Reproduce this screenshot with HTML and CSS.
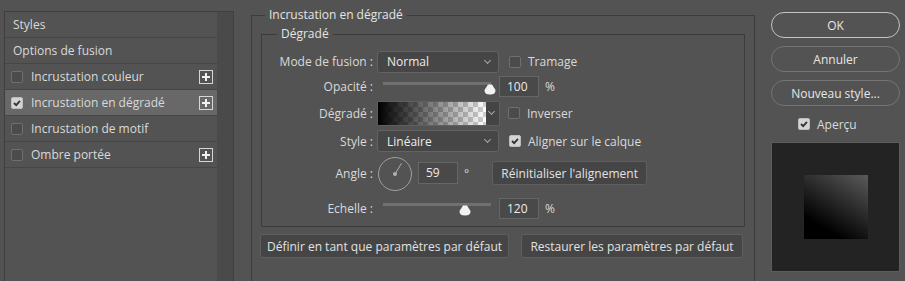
FILE: index.html
```html
<!DOCTYPE html>
<html lang="fr">
  <head>
    <meta charset="UTF-8" />
    <title>Style de calque</title>
    <link rel="stylesheet" href="styles.css">
  </head>
  <body>
    <div class="dialog">
      <div class="sidebar">
        <div class="style-list">
          <div class="list-row">Styles</div>
          <div class="list-row">Options de fusion</div>
          <div class="list-row check-row">
            <span class="checkbox"></span>Incrustation couleur
            <span class="plus"></span>
          </div>
          <div class="list-row check-row selected">
            <span class="checkbox checked"></span>Incrustation en dégradé
            <span class="plus"></span>
          </div>
          <div class="list-row check-row">
            <span class="checkbox"></span>Incrustation de motif
          </div>
          <div class="list-row check-row">
            <span class="checkbox"></span>Ombre portée
            <span class="plus"></span>
          </div>
        </div>
        <div class="scroll"></div>
      </div>

      <div class="main">
        <div class="group outer">
          <div class="group-title">Incrustation en dégradé</div>
          <div class="group inner">
            <div class="group-title">Dégradé</div>

            <div class="row row-1">
              <span class="row-label">Mode de fusion :</span>
              <div class="select">Normal<span class="chevron"></span></div>
              <span class="checkbox gap-10"></span><span class="check-label">Tramage</span>
            </div>

            <div class="row row-2">
              <span class="row-label">Opacité :</span>
              <div class="slider">
                <div class="track"></div>
                <div class="thumb" style="left: 100%"></div>
              </div>
              <div class="field">100</div><span class="unit">%</span>
            </div>

            <div class="row row-3">
              <span class="row-label">Dégradé :</span>
              <div class="swatch">
                <div class="swatch-ramp"></div>
                <div class="swatch-drop"><span class="chevron"></span></div>
              </div>
              <span class="checkbox gap-8"></span><span class="check-label">Inverser</span>
            </div>

            <div class="row row-4">
              <span class="row-label">Style :</span>
              <div class="select">Linéaire<span class="chevron"></span></div>
              <span class="checkbox checked gap-10"></span><span class="check-label">Aligner sur le calque</span>
            </div>

            <div class="row row-5">
              <span class="row-label">Angle :</span>
              <svg class="dial" width="36" height="36" viewBox="0 0 36 36">
                <circle cx="18" cy="18" r="16.5" fill="none" stroke="#a0a0a0" stroke-width="1" />
                <line x1="18" y1="18" x2="24.5" y2="7.3" stroke="#b0b0b0" stroke-width="1" />
                <circle cx="18" cy="18" r="2" fill="#b0b0b0" />
              </svg>
              <div class="field angle">59</div><span class="unit">°</span>
              <button class="btn reset">Réinitialiser l'alignement</button>
            </div>

            <div class="row row-6">
              <span class="row-label">Echelle :</span>
              <div class="slider">
                <div class="track"></div>
                <div class="thumb" style="left: 77%"></div>
              </div>
              <div class="field">120</div><span class="unit">%</span>
            </div>
          </div>

          <div class="defaults">
            <button class="btn set-default">Définir en tant que paramètres par défaut</button>
            <button class="btn restore-default">Restaurer les paramètres par défaut</button>
          </div>
        </div>
      </div>

      <div class="actions">
        <button class="pill primary">OK</button>
        <button class="pill">Annuler</button>
        <button class="pill">Nouveau style...</button>
        <div class="preview-toggle">
          <span class="checkbox checked"></span><span class="check-label">Aperçu</span>
        </div>
        <div class="preview">
          <div class="preview-square"></div>
        </div>
      </div>
    </div>
  </body>
</html>
```

FILE: styles.css
```css
body {
  margin: 0;
  height: 281px;
  overflow: hidden;
  background-color: #535353;
  font-family: "Open Sans", "Noto Sans", sans-serif;
  font-size: 12px;
  color: #dadada;
}
.dialog {
  display: flex;
  height: 281px;
}

/* left style list */
.sidebar {
  display: flex;
  width: 228px;
  margin: 11px 0 0 4px;
  border: 1px solid #3f3f3f;
  border-bottom: none;
}
.style-list {
  flex: 1;
}
.scroll {
  width: 16px;
  background-color: #4a4a4a;
}
.list-row {
  display: flex;
  align-items: center;
  height: 25px;
  padding-left: 8px;
  border-bottom: 1px solid #464646;
  white-space: nowrap;
}
.check-row {
  padding-left: 6px;
}
.check-row .checkbox {
  margin-right: 8px;
}
.selected {
  background-color: #686868;
}
.plus {
  position: relative;
  width: 12px;
  height: 12px;
  margin: 0 4px 0 auto;
  border: 1px solid #d6d6d6;
}
.plus::before,
.plus::after {
  content: "";
  position: absolute;
  background-color: #f0f0f0;
}
.plus::before {
  left: 2px;
  top: 5px;
  width: 8px;
  height: 2px;
}
.plus::after {
  left: 5px;
  top: 2px;
  width: 2px;
  height: 8px;
}

/* checkboxes */
.checkbox {
  display: inline-block;
  flex: none;
  box-sizing: border-box;
  width: 12px;
  height: 12px;
  border: 1px solid #6f6f6f;
  border-radius: 2px;
  background-color: #4b4b4b;
}
.checkbox.checked {
  border-color: #bdbdbd;
  background-color: #d4d4d4;
  background-image: url("data:image/svg+xml,%3Csvg xmlns='http://www.w3.org/2000/svg' width='10' height='10'%3E%3Cpath d='M2 5 L4.2 7.2 L8 2.8' fill='none' stroke='%23333' stroke-width='1.8'/%3E%3C/svg%3E");
  background-position: center;
  background-repeat: no-repeat;
}
.check-label {
  margin-left: 7px;
  white-space: nowrap;
}
.gap-10 {
  margin-left: 10px;
}
.gap-8 {
  margin-left: 8px;
}

/* center groups */
.main {
  width: 504px;
  margin-left: 17px;
}
.group {
  border: 1px solid #3c3c3c;
}
.group-title {
  width: fit-content;
  margin-top: -9px;
  padding: 0 4px;
  line-height: 16px;
  background-color: #535353;
  color: #e4e4e4;
}
.outer {
  box-sizing: border-box;
  height: 266px;
  margin-top: 15px;
  border-bottom: none;
}
.outer > .group-title {
  margin-left: 13px;
}
.inner {
  margin: 11px 9px 0;
  padding-top: 8px;
}
.inner > .group-title {
  position: relative;
  top: -8px;
  margin-left: 15px;
  margin-bottom: -16px;
}
.inner > .row-1 {
  margin-top: 16px;
}
.row {
  display: flex;
  align-items: center;
}
.row-1 { height: 23px; }
.row-2 { height: 27px; }
.row-3 { height: 26px; }
.row-4 { height: 30px; }
.row-5 { height: 34px; }
.row-6 { height: 36px; }
.row-label {
  width: 111px;
  margin-right: 4px;
  text-align: right;
  white-space: nowrap;
}

.select {
  display: flex;
  align-items: center;
  box-sizing: border-box;
  width: 122px;
  height: 22px;
  padding-left: 9px;
  border: 1px solid #636363;
  border-radius: 3px;
  background-color: #464646;
  color: #ececec;
}
.chevron {
  width: 4px;
  height: 4px;
  margin: -3px 8px 0 auto;
  border-right: 1px solid #a8a8a8;
  border-bottom: 1px solid #a8a8a8;
  transform: rotate(45deg);
}

.slider {
  position: relative;
  width: 108px;
  height: 16px;
  margin: 0 8px 0 6px;
}
.track {
  position: absolute;
  left: 0;
  right: 0;
  top: 3px;
  height: 3px;
  background-color: #707070;
}
.thumb {
  position: absolute;
  top: 5px;
  width: 12px;
  height: 11px;
  margin-left: -7px;
  background-image: url("data:image/svg+xml,%3Csvg xmlns='http://www.w3.org/2000/svg' width='12' height='11'%3E%3Cpath d='M4 0.5 H8 L11.5 6 Q11.8 10.5 6 10.5 Q0.2 10.5 0.5 6 Z' fill='%23f2f2f2'/%3E%3C/svg%3E");
}
.field {
  box-sizing: border-box;
  width: 40px;
  height: 21px;
  padding: 1px 0 0 7px;
  border: 1px solid #666;
  background-color: #494949;
  color: #ececec;
  line-height: 17px;
}
.field.angle {
  height: 22px;
  margin-left: 5px;
}
.unit {
  margin-left: 6px;
}

.swatch {
  display: flex;
  box-sizing: border-box;
  width: 123px;
  height: 25px;
  border: 1px solid #5f5f5f;
  border-radius: 2px;
}
.swatch-ramp {
  flex: 1;
  background-color: #fff;
  background-image:
    linear-gradient(to right, #000, rgba(0, 0, 0, 0)),
    linear-gradient(45deg, #cfcfcf 25%, transparent 25%, transparent 75%, #cfcfcf 75%),
    linear-gradient(45deg, #cfcfcf 25%, transparent 25%, transparent 75%, #cfcfcf 75%);
  background-size: 100% 100%, 10px 10px, 10px 10px;
  background-position: 0 0, 0 0, 5px 5px;
}
.swatch-drop {
  display: flex;
  align-items: center;
  width: 13px;
  background-color: #444;
}
.swatch-drop .chevron {
  margin: -3px 0 0 3px;
}

.dial {
  flex: none;
  margin-top: 2px;
}
.btn {
  box-sizing: border-box;
  height: 24px;
  padding: 0;
  border: 1px solid #5f5f5f;
  border-radius: 3px;
  background-color: #454545;
  color: #e2e2e2;
  font-family: inherit;
  font-size: 12px;
}
.reset {
  width: 155px;
  margin-left: 23px;
}
.defaults {
  display: flex;
  gap: 12px;
  margin: 7px 0 0 8px;
}
.set-default {
  width: 249px;
}
.restore-default {
  width: 222px;
}

/* right column */
.actions {
  display: flex;
  flex-direction: column;
  width: 129px;
  margin-left: 16px;
  padding-top: 12px;
}
.pill {
  height: 26px;
  margin-bottom: 8px;
  border: 1px solid #747474;
  border-radius: 13px;
  background-color: #535353;
  color: #e6e6e6;
  font-family: inherit;
  font-size: 12px;
}
.pill.primary {
  border-color: #c4c4c4;
}
.preview-toggle {
  display: flex;
  align-items: center;
  height: 18px;
  margin: 1px 0 9px 0;
  padding-left: 27px;
}
.preview-toggle .check-label {
  margin-left: 7px;
}
.preview {
  display: flex;
  align-items: center;
  justify-content: center;
  box-sizing: border-box;
  height: 130px;
  border: 1px solid #5c5c5c;
  background-color: #232323;
}
.preview-square {
  width: 64px;
  height: 64px;
  background-image: linear-gradient(31deg, #000 22%, #5a5a5a 100%);
}
```
